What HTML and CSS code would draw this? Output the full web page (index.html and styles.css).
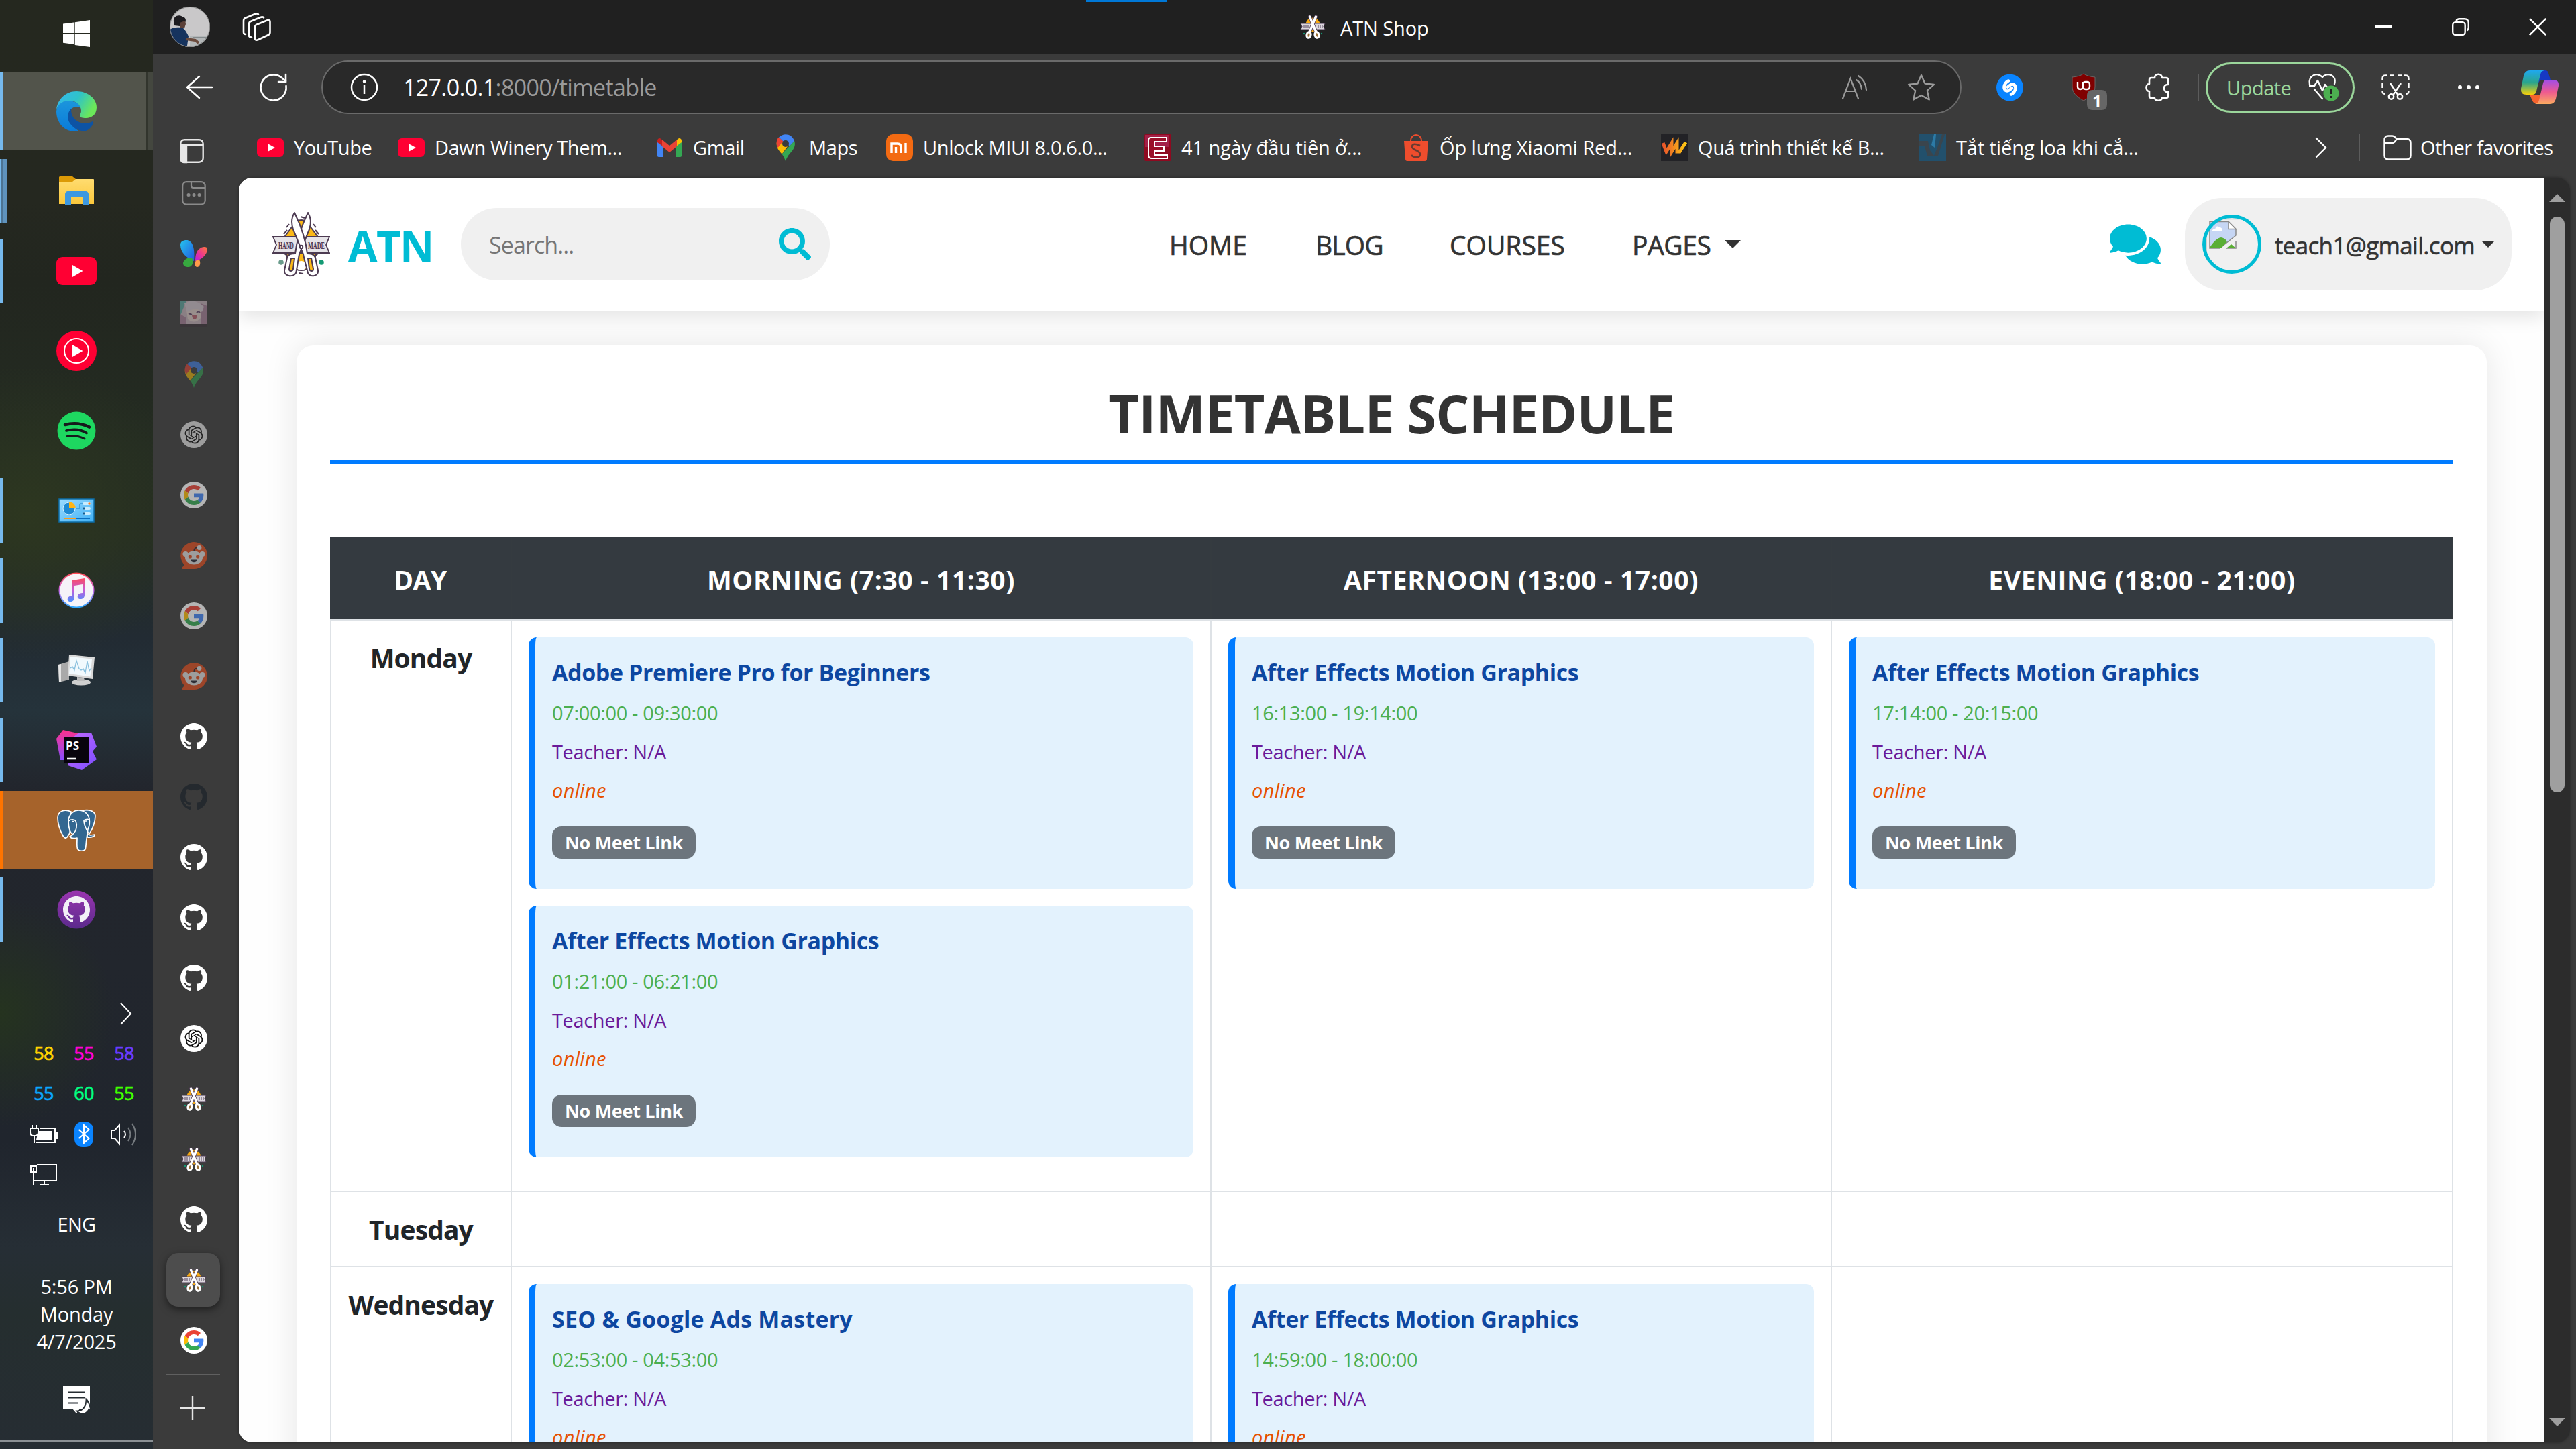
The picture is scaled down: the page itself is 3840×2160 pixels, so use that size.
FILE: index.html
```html
<!DOCTYPE html>
<html lang="en">
<head>
<meta charset="utf-8">
<title>ATN Shop</title>
<link rel="stylesheet" href="styles.css">
</head>
<body>
<svg class="defs" width="0" height="0">
  <defs>
    <linearGradient id="edgeTop" x1="0" y1="0" x2="1" y2="0.4"><stop offset="0" stop-color="#35b8f1"/><stop offset=".55" stop-color="#2fc3c8"/><stop offset="1" stop-color="#6be85a"/></linearGradient>
    <linearGradient id="edgeLeft" x1="0" y1="0" x2="0" y2="1"><stop offset="0" stop-color="#1c95dc"/><stop offset="1" stop-color="#0a7bd9"/></linearGradient>
    <linearGradient id="folder" x1="0" y1="0" x2="0" y2="1"><stop offset="0" stop-color="#ffdc70"/><stop offset="1" stop-color="#fbc83c"/></linearGradient>
    <linearGradient id="panel" x1="0" y1="0" x2="1" y2="1"><stop offset="0" stop-color="#9ddcff"/><stop offset="1" stop-color="#3fb0f5"/></linearGradient>
    <linearGradient id="note" x1="0" y1="0" x2="0" y2="1"><stop offset="0" stop-color="#fb4a63"/><stop offset=".5" stop-color="#c55bd8"/><stop offset="1" stop-color="#4a90ff"/></linearGradient>
    <linearGradient id="ring" x1="0" y1="0" x2="0" y2="1"><stop offset="0" stop-color="#ff4b57"/><stop offset=".5" stop-color="#c86be8"/><stop offset="1" stop-color="#2fa8ff"/></linearGradient>
    <linearGradient id="psA" x1="0" y1="0" x2="0" y2="1"><stop offset="0" stop-color="#ff318c"/><stop offset="1" stop-color="#8a4dff"/></linearGradient>
    <linearGradient id="psB" x1="0" y1="0" x2="1" y2="1"><stop offset="0" stop-color="#c76bff"/><stop offset="1" stop-color="#7a4dff"/></linearGradient>
    <linearGradient id="ghd" x1="0" y1="0" x2="0" y2="1"><stop offset="0" stop-color="#9a35b0"/><stop offset="1" stop-color="#5b2a8c"/></linearGradient>
    <linearGradient id="wingA" x1="0" y1="0" x2="1" y2="1"><stop offset="0" stop-color="#25c3ee"/><stop offset="1" stop-color="#2257e0"/></linearGradient>
    <linearGradient id="wingB" x1="1" y1="0" x2="0" y2="1"><stop offset="0" stop-color="#ff7a3a"/><stop offset=".5" stop-color="#ee3a8a"/><stop offset="1" stop-color="#b31ce8"/></linearGradient>
    <linearGradient id="copA" x1="0" y1="0" x2="0" y2="1"><stop offset="0" stop-color="#1fa8f0"/><stop offset=".5" stop-color="#2aa58c"/><stop offset="1" stop-color="#f7d10a"/></linearGradient>
    <linearGradient id="copB" x1="0" y1="0" x2="0" y2="1"><stop offset="0" stop-color="#a04de8"/><stop offset=".5" stop-color="#ee5a90"/><stop offset="1" stop-color="#fbab60"/></linearGradient>
    <linearGradient id="wg" x1="0" y1="0" x2="1" y2="0"><stop offset="0" stop-color="#e8542a"/><stop offset="1" stop-color="#ffc814"/></linearGradient>
    <clipPath id="round"><circle cx="30" cy="30" r="30"/></clipPath>
  </defs>

  <symbol id="github" viewBox="0 0 16 16"><path fill="currentColor" d="M8 0C3.58 0 0 3.58 0 8c0 3.54 2.29 6.53 5.47 7.59.4.07.55-.17.55-.38 0-.19-.01-.82-.01-1.49-2.01.37-2.53-.49-2.69-.94-.09-.23-.48-.94-.82-1.13-.28-.15-.68-.52-.01-.53.63-.01 1.08.58 1.23.82.72 1.21 1.87.87 2.33.66.07-.52.28-.87.51-1.07-1.78-.2-3.64-.89-3.64-3.95 0-.87.31-1.59.82-2.15-.08-.2-.36-1.02.08-2.12 0 0 .67-.21 2.2.82.64-.18 1.32-.27 2-.27.68 0 1.36.09 2 .27 1.53-1.04 2.2-.82 2.2-.82.44 1.1.16 1.92.08 2.12.51.56.82 1.27.82 2.15 0 3.07-1.87 3.75-3.65 3.95.29.25.54.73.54 1.48 0 1.07-.01 1.93-.01 2.2 0 .21.15.46.55.38A8.013 8.013 0 0016 8c0-4.42-3.58-8-8-8z"/></symbol>

  <symbol id="openai" viewBox="0 0 40 40"><circle cx="20" cy="20" r="20" fill="#fff"/><path transform="translate(6.5 6.5) scale(1.125)" fill="#111" d="M22.2819 9.8211a5.9847 5.9847 0 0 0-.5157-4.9108 6.0462 6.0462 0 0 0-6.5098-2.9A6.0651 6.0651 0 0 0 4.9807 4.1818a5.9847 5.9847 0 0 0-3.9977 2.9 6.0462 6.0462 0 0 0 .7427 7.0966 5.98 5.98 0 0 0 .511 4.9107 6.051 6.051 0 0 0 6.5146 2.9001A5.9847 5.9847 0 0 0 13.2599 24a6.0557 6.0557 0 0 0 5.7718-4.2058 5.9894 5.9894 0 0 0 3.9977-2.9001 6.0557 6.0557 0 0 0-.7475-7.0729zm-9.022 12.6081a4.4755 4.4755 0 0 1-2.8764-1.0408l.1419-.0804 4.7783-2.7582a.7948.7948 0 0 0 .3927-.6813v-6.7369l2.02 1.1686a.071.071 0 0 1 .038.052v5.5826a4.504 4.504 0 0 1-4.4945 4.4944zm-9.6607-4.1254a4.4708 4.4708 0 0 1-.5346-3.0137l.142.0852 4.783 2.7582a.7712.7712 0 0 0 .7806 0l5.8428-3.3685v2.3324a.0804.0804 0 0 1-.0332.0615L9.74 19.9502a4.4992 4.4992 0 0 1-6.1408-1.6464zM2.3408 7.8956a4.485 4.485 0 0 1 2.3655-1.9728V11.6a.7664.7664 0 0 0 .3879.6765l5.8144 3.3543-2.0201 1.1685a.0757.0757 0 0 1-.071 0l-4.8303-2.7865A4.504 4.504 0 0 1 2.3408 7.872zm16.5963 3.8558L13.1038 8.364 15.1192 7.2a.0757.0757 0 0 1 .071 0l4.8303 2.7913a4.4944 4.4944 0 0 1-.6765 8.1042v-5.6772a.79.79 0 0 0-.407-.667zm2.0107-3.0231l-.142-.0852-4.7735-2.7818a.7759.7759 0 0 0-.7854 0L9.409 9.2297V6.8974a.0662.0662 0 0 1 .0284-.0615l4.8303-2.7866a4.4992 4.4992 0 0 1 6.6802 4.66zM8.3065 12.863l-2.02-1.1638a.0804.0804 0 0 1-.038-.0567V6.0742a4.4992 4.4992 0 0 1 7.3757-3.4537l-.142.0805L8.704 5.459a.7948.7948 0 0 0-.3927.6813zm1.0976-2.3654l2.602-1.4998 2.6069 1.4998v2.9994l-2.5974 1.4997-2.6067-1.4997Z"/></symbol>

  <symbol id="google" viewBox="0 0 40 40"><circle cx="20" cy="20" r="20" fill="#fff"/><g transform="translate(5 5) scale(.625)"><path fill="#EA4335" d="M24 9.5c3.54 0 6.71 1.22 9.21 3.6l6.85-6.85C35.9 2.38 30.47 0 24 0 14.62 0 6.51 5.38 2.56 13.22l7.98 6.19C12.43 13.72 17.74 9.5 24 9.5z"/><path fill="#4285F4" d="M46.98 24.55c0-1.57-.15-3.09-.38-4.55H24v9.02h12.94c-.58 2.96-2.26 5.48-4.78 7.18l7.73 6c4.51-4.18 7.09-10.36 7.09-17.65z"/><path fill="#FBBC05" d="M10.53 28.59c-.48-1.45-.76-2.99-.76-4.59s.27-3.14.76-4.59l-7.98-6.19C.92 16.46 0 20.12 0 24c0 3.88.92 7.54 2.56 10.78l7.97-6.19z"/><path fill="#34A853" d="M24 48c6.48 0 11.93-2.13 15.89-5.81l-7.73-6c-2.15 1.45-4.92 2.3-8.16 2.3-6.26 0-11.57-4.22-13.47-9.91l-7.98 6.19C6.51 42.62 14.62 48 24 48z"/></g></symbol>

  <symbol id="reddit" viewBox="0 0 40 40"><path fill="#ff4f18" d="M20 0a20 20 0 1 1 0 40H3.5c-1.500 0-2-1.200-1-2.300L6 34A20 20 0 0 1 20 0z"/><circle cx="7.500" cy="18" r="4" fill="#fff"/><circle cx="32.500" cy="18" r="4" fill="#fff"/><ellipse cx="20" cy="23.500" rx="13" ry="10" fill="#fff"/><path d="M20 14c0-4 2-6 6-5.500" fill="none" stroke="#223" stroke-width="1.500"/><circle cx="28" cy="8.500" r="3.400" fill="#fff"/><circle cx="14.300" cy="22" r="2.600" fill="#ff4f18"/><circle cx="25.700" cy="22" r="2.600" fill="#ff4f18"/><path d="M15 26.500h10c-.5 5-9.500 5-10 0z" fill="#223"/></symbol>

  <symbol id="maps" viewBox="0 0 28 40"><path fill="#34A853" d="M27.200 10c2.500 8-2 13.500-6.500 18.500C17.500 32 16 35 14 40c-2-5-3-7-5.500-10.500z"/><path fill="#FBBC04" d="M.8 12.500 7.200 9l9.600 9.500L8.500 29.500C4.500 25 0 20 .8 12.500z"/><path fill="#EA4335" d="M.6 14C.4 10 2 6 4 4.500l6.500 5.500L2.500 20C1.500 18 .8 16 .6 14z"/><path fill="#4285F4" d="M4 4.500C10-2 23-2 27.200 10L20 17.500 10 10z"/><circle cx="14" cy="14" r="5" fill="#3b3b3b"/></symbol>

  <symbol id="youtube" viewBox="0 0 60 42"><rect width="60" height="42" rx="9" fill="#ff0033"/><path d="M24 12v18l15.500-9z" fill="#fff"/></symbol>

  <symbol id="atn" viewBox="0 0 86 98">
    <path d="M43 13c6 0 9 3 12 8l15 20H16l15-20c3-5 6-8 12-8z" fill="#fbb917" stroke="#4d3b52" stroke-width="2"/>
    <path d="M21 62h44c-2 16-11 26-22 26S23 78 21 62z" fill="#fbb917" stroke="#4d3b52" stroke-width="2"/>
    <ellipse cx="43" cy="81" rx="8" ry="7" fill="#fff"/>
    <path d="M1 38h84l-5 12 5 12H1l5-12z" fill="#e6e4e8" stroke="#4d3b52" stroke-width="1.800"/>
    <path d="M17 34l5-6M21 24l4-5M69 34l-5-6M65 24l-4-5M42 8l6 2M40 92l6 1M22 66l-4-3M64 66l4-3" stroke="#4d3b52" stroke-width="2"/>
    <g fill="#fff" stroke="#4d3b52" stroke-width="2" stroke-linejoin="round">
      <path d="M53 2c5 8 5 16 2 25L40 64c-2 10-3 20-5 28-4 7-18 5-17-4l4-19c2-6 8-6 12-6 2-18 8-38 19-61z"/>
      <path d="M33 2c-5 8-5 16-2 25l15 37c2 10 5 20 7 28 4 7 16 5 15-4l-4-19c-2-6-8-6-12-6-2-18-8-38-19-61z"/>
      <path d="M28 70h5l-2 16c-1 4-6 4-6 0z" fill="#fbb917"/><path d="M58 70h-5l2 16c1 4 6 4 6 0z" fill="#fbb917"/>
      <circle cx="43" cy="53" r="2.200"/>
    </g>
    <circle cx="13" cy="76" r="3.800" fill="#6a9c8c"/><circle cx="73" cy="76" r="3.800" fill="#149a74"/>
    <text x="9" y="56" class="logo-word" textLength="23" lengthAdjust="spacingAndGlyphs">HAND</text>
    <text x="53" y="56" class="logo-word" textLength="25" lengthAdjust="spacingAndGlyphs">MADE</text>
  </symbol>

  <symbol id="atn-small" viewBox="0 0 40 40">
    <circle cx="20" cy="17" r="10.500" fill="#f6a913"/>
    <path d="M2 15h36l-2 4.500 2 4.500H2l2-4.500z" fill="#dcd8de" stroke="#4d3b52" stroke-width="1"/>
    <path d="M7 17v5M10 17v5M13 17v5M28 17v5M31 17v5M34 17v5" stroke="#6a5a70" stroke-width="1.200"/>
    <g fill="none" stroke="#4d3b52" stroke-width="5" stroke-linecap="round"><path d="M15.500 5 25 28M24.500 5 15 28"/></g>
    <g fill="none" stroke="#fff" stroke-width="3.400" stroke-linecap="round"><path d="M15.500 5 25 28M24.500 5 15 28"/></g>
    <g fill="#9a7038" stroke="#fff" stroke-width="3"><ellipse cx="14" cy="32" rx="3" ry="4.400" transform="rotate(14 14 32)"/><ellipse cx="26" cy="32" rx="3" ry="4.400" transform="rotate(-14 26 32)"/></g>
    <circle cx="33" cy="30" r="1.200" fill="#149a74"/><circle cx="7" cy="30" r="1.200" fill="#149a74"/>
  </symbol>
</svg>

<div class="desktop">
  <aside class="taskbar">
    <div class="task start"><svg width="40" height="40" viewBox="0 0 40 40"><path fill="#fff" d="M0 5.600 16.300 3.400V19H0zM17.700 3.200 40 0v19H17.700zM0 20.400h16.300V36L0 33.800zM17.700 20.400H40V40l-22.300-3z"/></svg></div>
    <div class="task active"><svg width="60" height="60" viewBox="0 0 60 60"><path fill="url(#edgeLeft)" d="M0 30C1 17 12 13 21 14.500c9 1 15 5 16 11-4-4-14-3-17 4-3 9 2 22 13 29.500C15 63 0 49 0 30z"/><path fill="#0d53a4" d="M22.500 25.500C15 33 15 44 24 52c6 6 14 8 20 7 5-2 9-6 11-12 .5-2-.5-2.500-2-1.600-6 3-14 3.300-20 .1-8-4-12-12-10.500-20z"/><path fill="url(#edgeTop)" d="M0 27C2 11 15 0 30 0c17 0 30 11 30 24 0 11-8 16-16 16-5 0-9-1-9-3.500 0-2 2-3 2-7.500C37 20 29 14 19 14 10 14 3 19 0 27z"/></svg></div>
    <div class="task open multi"><svg width="54" height="44" viewBox="0 0 54 44"><path fill="#dc9a06" d="M2 0h19l5 4v5H1V1z"/><path fill="url(#folder)" d="M1 8h20l5-4h26c1 0 1 1 1 1v36H1z"/><path fill="#3d98e0" d="M10 43V26c0-2 2-4 4-4h27c2 0 4 2 4 4v17h-9V30H19v13z"/></svg></div>
    <div class="task open"><svg width="60" height="42"><use href="#youtube"/></svg></div>
    <div class="task"><svg width="60" height="60" viewBox="0 0 60 60"><circle cx="30" cy="30" r="30" fill="#ff0033"/><circle cx="30" cy="30" r="18" fill="none" stroke="#fff" stroke-width="2"/><path d="M24 21v18l15.500-9z" fill="#fff"/></svg></div>
    <div class="task"><svg width="58" height="58" viewBox="0 0 58 58"><circle cx="29" cy="29" r="28.500" fill="#1ed760"/><g fill="none" stroke="#16191b" stroke-linecap="round"><path d="M12 20c12-3 25-2 36 3.500" stroke-width="4.600"/><path d="M14 29c10-2.500 21-2 30 3.500" stroke-width="3.800"/><path d="M15 37.500c8-1.500 17-1 26 3.500" stroke-width="3"/></g></svg></div>
    <div class="task open"><svg width="54" height="36" viewBox="0 0 54 36"><rect x="1" y="1" width="52" height="34" fill="url(#panel)" stroke="#0d6ea8" stroke-width="1.500"/><circle cx="16" cy="15" r="9" fill="#1f8bd4" stroke="#d5f0ff"/><path d="M16 15V5a10 10 0 0 1 10 10z" fill="#ffb515"/><path d="M27 15h5V8h4" fill="none" stroke="#1b80c0"/><path d="M38 8h8M38 15h8M38 22h8" stroke="#c8ecff" stroke-width="4" stroke-linecap="round"/><circle cx="46" cy="8" r="1.700" fill="#ff7a1a"/><circle cx="38" cy="15" r="1.700" fill="#0d5c94"/><circle cx="38" cy="22" r="1.700" fill="#0d5c94"/><path d="M8 30h19" stroke="#ff9a15" stroke-width="2"/><path d="M27 30h20" stroke="#0c6fc0" stroke-width="2"/></svg></div>
    <div class="task open"><svg width="54" height="54" viewBox="0 0 54 54"><circle cx="27" cy="27" r="25.500" fill="#f5f3f8" stroke="url(#ring)" stroke-width="2"/><path fill="url(#note)" d="M21 12l18-3v25c0 4-3 6-6 6s-5-2-4-5c1-3 4-4 7-4V18l-12 2v18c0 4-3 6-6 6s-5-2-4-5c1-3 4-4 7-4z"/></svg></div>
    <div class="task open"><svg width="56" height="48" viewBox="0 0 56 48"><path fill="#a9a9a9" d="M1 16 17 11v27L2 42z"/><path fill="#e4e4e4" d="M1 16l4-1v26l-3 1z"/><path fill="#d9d9d9" d="M17 1l38 4-3 32-37-5z"/><path fill="#f1f9fd" d="M19 4l32 3.500-2.500 26L17 29z"/><path d="M19 21l3-2 3 5 3-14 4 12 3 2 3-2 3 6 3-17 3 14 3-4" fill="none" stroke="#8ac0de" stroke-width="1.300"/><ellipse cx="35" cy="42" rx="14" ry="4.500" fill="#cfcfcf"/><path fill="#bbb" d="M29 34l10 1 1 5H29z"/></svg></div>
    <div class="task open"><svg width="60" height="60" viewBox="0 0 60 60"><path fill="url(#psA)" d="M10 0l22 5v40H6L0 13z"/><path fill="url(#psB)" d="M34 4h18l8 21-6 7 6 12-22 16-21-7V17z"/><rect x="11" y="11" width="38" height="38" fill="#08040c"/><text x="14" y="30" class="ps-word">PS</text><path d="M16 43h14" stroke="#fff" stroke-width="2.600"/></svg></div>
    <div class="task alert"><svg width="60" height="62" viewBox="0 0 60 62"><g fill="#336791" stroke="#fff" stroke-width="1.700" stroke-linejoin="round"><path d="M38 3c8-3 19-1 20 7 0 9-4 20-9 27l-9-9z"/><path d="M22 4C12 0 2 3 2 13c0 9 4 20 8 27 2 3 4 4 6 2l4-6z"/><path d="M46 37c3 3 6 2 11 1 1 2-4 5-11 4z"/><path d="M18 16C20 6 27 2 33 2c9 0 15 6 16 13 1 6 0 11-2 15l-2 14c-1 8-1 14-2 16-2 3-9 3-11 0-2-3-1-11-1-17-4 1-9 1-11-2 2-1 4-2 5-3-6-3-7-12-7-22z"/><path d="M18 18c4-3 9-3 11 0 2 5 2 14-4 19M41 17c3-2 6-2 8-1M41 17c0 8 4 13 6 18" fill="none"/></g><path d="M23 18.500h4M42 18h3" stroke="#fff" stroke-width="1.600"/></svg></div>
    <div class="task open"><svg width="58" height="58" viewBox="0 0 58 58"><circle cx="29" cy="29" r="28.500" fill="url(#ghd)"/><use href="#github" x="9" y="9" width="40" height="40" color="#f3f0f7"/></svg></div>

    <div class="tray">
      <i></i><i></i><svg class="chevron" width="18" height="34" viewBox="0 0 18 34" fill="none" stroke="#fff" stroke-width="2"><path d="M1 1l15 16L1 33"/></svg>
      <span class="temp t1">58</span><span class="temp t2">55</span><span class="temp t3">58</span>
      <span class="temp t4">55</span><span class="temp t5">60</span><span class="temp t6">55</span>
      <svg width="42" height="30" viewBox="0 0 42 30" fill="none" stroke="#fff" stroke-width="2"><path d="M15 6h23v21H10M39 12h2v9h-2"/><path d="M13 10h20v13H10z" fill="#fff" stroke="none"/><path d="M1 6h12v6c0 4-2 5-5 5H6c-3 0-5-2-5-5zM4 6V1M10 6V1M7 17v11" fill="#22282d"/></svg>
      <svg width="28" height="40" viewBox="0 0 28 40"><rect width="28" height="38" y="1" rx="12" fill="#0a84ff"/><path d="M6.500 13l15 13L14 33V6l7.500 7-15 13" fill="none" stroke="#fff" stroke-width="2"/></svg>
      <svg width="42" height="38" viewBox="0 0 42 38" fill="none" stroke="#fff" stroke-width="2"><path d="M2 13h5l7-8v28l-7-8H2z"/><path d="M21 14q4 5 0 10"/><path d="M27 9q7 10 0 20M33 3q10 16 0 32" stroke="#777c80"/></svg>
      <svg width="42" height="34" viewBox="0 0 42 34" fill="none" stroke="#fff" stroke-width="2"><path d="M11 2h29v24H6M15 32h14M22 26v6"/><path d="M2 4h8v9H2zM6 7v25"/></svg><i></i><i></i>
    </div>
    <div class="lang">ENG</div>
    <div class="clock"><span>5:56 PM</span><span>Monday</span><span>4/7/2025</span></div>
    <div class="notify"><svg width="42" height="42" viewBox="0 0 42 42"><path fill="#fff" d="M1 0h40v34H26l-5 7-6-7H1z"/><path d="M9 9.500h24M9 17.500h24M9 25.500h14" stroke="#262d32" stroke-width="2"/><path d="M36 21c4 4 5 10 1 15s-11 5-14 2c6 0 13-6 13-17z" fill="#fff" stroke="#262d32" stroke-width="3"/><path d="M36 23c4 4 5 9 1 14s-10 4-13 1c6 0 12-6 12-15z" fill="#fff"/></svg></div>
    <div class="peek"></div>
  </aside>

  <div class="browser">
    <header class="titlebar">
      <svg class="avatar" width="60" height="60" viewBox="0 0 60 60"><g clip-path="url(#round)"><path fill="#c9c8c9" d="M0 0h60v60H0z"/><path fill="#b3b7b8" d="M30 44h30v16H30z"/><path d="M34 46h26" stroke="#555d60"/><path fill="#1c1b1f" d="M6 22c-1-8 8-11 13-7 5 1 6 5 4 9l-8 5-8-1z"/><path fill="#5b4038" d="M15 24l8-3 1 5-2 6-7 1z"/><path fill="#16335e" d="M0 34c6-4 14-4 20-2 4 3 6 8 8 12l-2 14L0 60z"/><path d="M24 48l14 2 5 4" fill="none" stroke="#6a4a3c" stroke-width="4"/></g><circle cx="30" cy="30" r="29.500" fill="none" stroke="#8a8a8a"/></svg>
      <svg class="workspaces" width="42" height="42" viewBox="0 0 42 42" fill="none" stroke="#fff" stroke-width="2.600" stroke-linejoin="round" stroke-linecap="round"><path d="M18 21.500q0-2.500 2.500-3.800l16-6.500q4-1 4 2.500v15.500q0 2.500-2.500 3.800l-15 7q-5 2-5-2z"/><path d="M13 36.500c-3 0-4-1-4-3V17q0-3 2.500-4L26 7q4-1.500 5 .5M4 32c-2 0-3-1-3-3V12q0-3 2.500-4L18 2q4-1.500 5 .5"/></svg>
      <div class="tab-title"><svg width="40" height="40"><use href="#atn-small"/></svg><span>ATN Shop</span></div>
      <div class="loading"></div>
      <div class="window-buttons">
        <svg width="26" height="26" viewBox="0 0 26 26"><path d="M0 12.500h26" stroke="#fff" stroke-width="3"/></svg>
        <svg width="26" height="26" viewBox="0 0 26 26" fill="none" stroke="#fff" stroke-width="2.400"><rect x="1.200" y="6.200" width="18.500" height="18.500" rx="4"/><path d="M6.500 4q1-2.800 5-2.800h7q6.300 0 6.300 6.300v6q0 4-2.800 5"/></svg>
        <svg width="26" height="26" viewBox="0 0 26 26" stroke="#fff" stroke-width="2.600"><path d="M.8.800l24.400 24.400M25.200.8L.8 25.200"/></svg>
      </div>
    </header>

    <div class="toolbar">
      <svg class="back" width="40" height="36" viewBox="0 0 40 36" fill="none" stroke="#fff" stroke-width="2.400" stroke-linecap="round" stroke-linejoin="round"><path d="M20 2 2 18l18 16M2 18h37"/></svg>
      <svg class="reload" width="42" height="42" viewBox="0 0 42 42" fill="none" stroke="#fff" stroke-width="2.600" stroke-linecap="round"><path d="M39.500 19A19 19 0 1 1 33 7l6 5"/><path d="M39 2v11H28"/></svg>
      <div class="address">
        <svg class="info" width="42" height="42" viewBox="0 0 42 42" fill="none" stroke="#fff" stroke-width="2.500"><circle cx="21" cy="21" r="19"/><path d="M21 18v13"/><circle cx="21" cy="12.500" r="1" fill="#fff"/></svg>
        <span class="url"><b>127.0.0.1</b>:8000/timetable</span>
        <svg class="read" width="40" height="38" viewBox="0 0 40 38" fill="none" stroke="#9a9a9a" stroke-width="2.200" stroke-linecap="round"><path d="M2 36 13.500 6 25 36M6 25h15M22 8q7 4 8 14M25 2q11 7 12 21"/></svg>
        <svg class="star" width="42" height="40" viewBox="0 0 42 40" fill="none" stroke="#9a9a9a" stroke-width="2.300" stroke-linejoin="round"><path d="M21 2l5.500 12.500L40 16 29.800 25l3 13.500L21 32 9.200 38.500l3-13.500L2 16l13.500-1.500z"/></svg>
      </div>
      <svg class="shazam" width="40" height="41" viewBox="0 0 40 41"><circle cx="20" cy="20.500" r="20" fill="#0a84ff"/><g fill="none" stroke="#fff" stroke-width="4.600" stroke-linecap="round" stroke-linejoin="round"><path d="M18 10.500c-3 1-6 5-6.500 9 0 5 4 7.500 7.500 5l4-3"/><path d="M22 30.500c3-1 6-5 6.500-9 0-5-4-7.500-7.500-5l-4 3"/></g></svg>
      <div class="ublock"><svg width="38" height="42" viewBox="0 0 38 42"><path d="M19 1c5 3 10 4.500 17 5v14c0 9-6 15-17 21C8 35 2 29 2 20V6C9 5.500 14 4 19 1z" fill="#800000" stroke="#666"/><path d="M10 13v7q0 4 4 4t4-4v-7M18 20q0 4 4 4h2q4 0 4-4v-3q0-4-4-4h-2q-4 0-4 4" fill="none" stroke="#fff" stroke-width="2.400"/></svg><span class="count">1</span></div>
      <svg class="puzzle" width="36" height="42" viewBox="0 0 36 42" fill="none" stroke="#fff" stroke-width="2.600" stroke-linejoin="round"><path d="M14 7c0-7 11-7 11 0h6q3 0 3 3v7c-8-1-8 12 0 11v6q0 3-3 3h-6c0 5-11 5-11 0H9q-3 0-3-3v-7C0 27 0 16 6 16v-6q0-3 3-3z"/></svg>
      <div class="rule"></div>
      <div class="update"><span>Update</span>
        <svg width="46" height="42" viewBox="0 0 46 42" fill="none"><path d="M2 17C-1 3 14-2 21 6c7-8 22-3 18 10M9 24l12 14" stroke="#fff" stroke-width="2.400" stroke-linecap="round"/><path d="M1 19h8l5-8 7 15 4-9 3 4h5" stroke="#fff" stroke-width="2.400" stroke-linejoin="round"/><circle cx="34" cy="30" r="11.500" fill="#4caf50"/><path d="M34 23v8M34 34v3" stroke="#222" stroke-width="2.600"/></svg></div>
      <svg class="snip" width="42" height="38" viewBox="0 0 42 38" fill="none" stroke="#fff" stroke-width="2.400"><path d="M1.500 8V6q0-4.500 4.500-4.500h2M13 1.500h6M24 1.500h6M34 1.500h2q4.500 0 4.500 4.500v2M1.500 13v7M40.500 13v7M1.500 25q0 4 4.500 4M40.500 25q0 4-4.500 4M13 13l12 18M29 13 17 31"/><circle cx="14.500" cy="33" r="3.700"/><circle cx="27.500" cy="33" r="3.700"/></svg>
      <svg class="dots" width="34" height="8" viewBox="0 0 34 8" fill="#fff"><circle cx="4" cy="4" r="3"/><circle cx="17" cy="4" r="3"/><circle cx="30" cy="4" r="3"/></svg>
      <svg class="copilot" width="56" height="52" viewBox="0 0 56 52"><path fill="#1638c4" d="M22 1h14q4 0 5 4l3 10H33q-6 0-8 7z"/><path fill="#f4632e" d="M13 37h16l6-8-2 15q-1 7-8 7-6 0-8-5z"/><path fill="url(#copA)" d="M13 1h22q-5 1-6 6l-6 25q-1 5-6 5H8q-9 0-8-9L4 9q2-8 9-8z"/><path fill="url(#copB)" d="M43 51H21q5-1 6-6l6-25q1-5 6-5h9q9 0 8 9l-4 19q-2 8-9 8z"/></svg>
    </div>

    <div class="workarea">
      <nav class="vtabs">
        <svg class="collapse" width="36" height="36" viewBox="0 0 36 36" fill="none" stroke="#e6e6e6" stroke-width="2.400"><rect x="1.200" y="1.200" width="33.500" height="33.500" rx="6"/><path d="M1 9h34"/><path d="M2 9h8v26H6q-4 0-4-4z" fill="#e6e6e6"/></svg>
        <svg class="group" width="36" height="36" viewBox="0 0 36 36" fill="none" stroke="#8a8a8a" stroke-width="2.200"><rect x="1.200" y="1.200" width="33.500" height="33.500" rx="6"/><path d="M14 1v6q0 3 3 3h18"/><path d="M10 20.500h.1M18 20.500h.1M26 20.500h.1" stroke-width="5" stroke-linecap="round"/></svg>
        <div class="vtab"><svg width="40" height="40" viewBox="0 0 40 40"><path fill="url(#wingA)" d="M0 7C0 2 4 0 9 0c8 0 13 10 11 31C10 27 0 19 0 7z"/><path fill="url(#wingB)" d="M40 13c0-4-8-4-12 0-4 3-6 9-6 18 8-1 18-9 18-18z"/><path fill="#37a83f" d="M19 28c-6-4-14 0-15 6 0 4 3 6 8 6 4 0 7-4 7-12z"/><path fill="#ff9a4a" d="M22 32c2-4 7-4 7 0 1 4-1 8-4 8s-4-3-3-8z"/></svg></div>
        <div class="vtab asleep"><svg width="40" height="40" viewBox="0 0 40 40"><path fill="#d9c2cc" d="M0 0h40v40H0z"/><path fill="#5fb5ad" d="M0 0h9L0 22z"/><path fill="#b58aa6" d="M30 4l10 4v28H30zM0 20l9 6v10H0z"/><path fill="#f7e1dc" d="M9 14q11-8 21 0v12q-9 10-19 2z"/><path fill="#e9dbe4" d="M6 4q14-9 29 5l-3 8q-8-9-22 0z"/><path d="M12 19l5 2M24 18q3-3 5 0" stroke="#6b4a74" stroke-width="2" fill="none"/><path fill="#c96274" d="M17 22h8q-1 6-4 6t-4-6z"/><path fill="#3a3038" d="M0 35h40v5H0z"/></svg></div>
        <div class="vtab asleep"><svg width="28" height="40"><use href="#maps"/></svg></div>
        <div class="vtab asleep"><svg width="40" height="40"><use href="#openai"/></svg></div>
        <div class="vtab asleep light"><svg width="40" height="40"><use href="#google"/></svg></div>
        <div class="vtab asleep"><svg width="40" height="40"><use href="#reddit"/></svg></div>
        <div class="vtab asleep light"><svg width="40" height="40"><use href="#google"/></svg></div>
        <div class="vtab asleep"><svg width="40" height="40"><use href="#reddit"/></svg></div>
        <div class="vtab"><svg width="40" height="40"><use href="#github"/></svg></div>
        <div class="vtab dark"><svg width="40" height="40"><use href="#github"/></svg></div>
        <div class="vtab"><svg width="40" height="40"><use href="#github"/></svg></div>
        <div class="vtab"><svg width="40" height="40"><use href="#github"/></svg></div>
        <div class="vtab"><svg width="40" height="40"><use href="#github"/></svg></div>
        <div class="vtab"><svg width="40" height="40"><use href="#openai"/></svg></div>
        <div class="vtab"><svg width="40" height="40"><use href="#atn-small"/></svg></div>
        <div class="vtab"><svg width="40" height="40"><use href="#atn-small"/></svg></div>
        <div class="vtab"><svg width="40" height="40"><use href="#github"/></svg></div>
        <div class="vtab current"><svg width="40" height="40"><use href="#atn-small"/></svg></div>
        <div class="vtab"><svg width="40" height="40"><use href="#google"/></svg></div>
        <div class="vtab-rule"></div>
        <svg class="new-tab" width="36" height="36" viewBox="0 0 36 36" stroke="#e6e6e6" stroke-width="2.400"><path d="M18 0v36M0 18h36"/></svg>
      </nav>

      <div class="column">
        <div class="bookmarks">
          <div class="bm w210"><svg width="40" height="28" viewBox="0 0 40 28"><rect width="40" height="28" rx="6" fill="#ff0033"/><path d="M16 8v12l11-6z" fill="#fff"/></svg><span>YouTube</span></div>
          <div class="bm w385"><svg width="40" height="28" viewBox="0 0 40 28"><rect width="40" height="28" rx="6" fill="#ff0033"/><path d="M16 8v12l11-6z" fill="#fff"/></svg><span>Dawn Winery Them...</span></div>
          <div class="bm w173"><svg width="40" height="28" viewBox="0 0 40 28"><path fill="#4285f4" d="M2 4l8 6v18H4q-2 0-2-2z"/><path fill="#34a853" d="M30 10l8-6v22q0 2-2 2h-6z"/><path fill="#c5221f" d="M2 4q0-4 4-4l4 3v9L2 6z"/><path fill="#fbbc04" d="M38 4q0-4-4-4l-4 3v9l8-6z"/><path fill="#ea4335" d="M9 2l11 9 11-9v10L20 21 9 12z"/></svg><span>Gmail</span></div>
          <div class="bm w170"><svg width="40" height="40"><use href="#maps"/></svg><span>Maps</span></div>
          <div class="bm w385"><svg width="40" height="40" viewBox="0 0 40 40"><rect width="40" height="40" rx="10" fill="#f36a12"/><path d="M8 28V14h9q5 0 5 5v9M14.500 19v9M29 13v15" fill="none" stroke="#fff" stroke-width="3.400"/></svg><span>Unlock MIUI 8.0.6.0...</span></div>
          <div class="bm w385 vi"><svg width="40" height="40" viewBox="0 0 40 40"><rect width="40" height="40" rx="2" fill="#8f0a20"/><path d="M1 1h36v18H1z" fill="#a32048"/><path d="M33 5H10q-4 0-4 4v22q0 5 5 5h23v-5H15v-6h14v-7H15v-7h18z" fill="#9a1028" stroke="#fff" stroke-width="2"/></svg><span>41 ngày đầu tiên ở...</span></div>
          <div class="bm w385 vi"><svg width="40" height="40" viewBox="0 0 40 40"><path fill="#ee4d2d" d="M2 10h36l-2 27q0 3-3 3H7q-3 0-3-3z"/><path d="M12 10c0-12 16-12 16 0" fill="none" stroke="#ee4d2d" stroke-width="2"/><path d="M26 17q-11-5-12 1c0 7 12 5 12 12-1 7-11 4-13 1" fill="none" stroke="#6a3a30" stroke-width="2.600"/></svg><span>Ốp lưng Xiaomi Red...</span></div>
          <div class="bm w385"><svg width="40" height="40" viewBox="0 0 40 40"><path fill="#222226" d="M0 0h40v40H0z"/><path d="M3 13l5 13 8-13v13l8-13v13l4 0 9-14" fill="none" stroke="url(#wg)" stroke-width="5"/></svg><span>Quá trình thiết kế B...</span></div>
          <div class="bm w385 vi"><svg width="40" height="40" viewBox="0 0 40 40"><path fill="#22506c" d="M0 0h40v40H0z"/><path fill="#3a454d" d="M0 10h13l3 14 6 8 5-12 7-20 4 0-10 32H12L8 18H0z"/><path fill="#2c7aa6" d="M18 16l4-16h3l-2 20z"/></svg><span>Tắt tiếng loa khi cắ...</span></div>
          <svg class="more" width="18" height="32" viewBox="0 0 18 32" fill="none" stroke="#fff" stroke-width="2.400"><path d="M1.500 1.500 16 16 1.500 30.500"/></svg>
          <div class="rule"></div>
          <svg class="folder" width="42" height="38" viewBox="0 0 42 38" fill="none" stroke="#fff" stroke-width="2.400" stroke-linejoin="round"><path d="M1.500 7.500q0-6 6-6H13q2 0 3.500 1.500L20 6h14.500q6 0 6 6v18.500q0 6-6 6h-27q-6 0-6-6zM2 12h11q2 0 3.500-1.500L20 6"/></svg>
          <span class="other">Other favorites</span>
        </div>

        <div class="viewport">
          <div class="page">
            <header class="site-header">
              <svg class="logo" width="86" height="98"><use href="#atn"/></svg>
              <span class="brand">ATN</span>
              <div class="search"><span>Search...</span><svg width="48" height="48" viewBox="0 0 512 512"><path fill="#00bcd4" d="M505 442.700L405.300 343c-4.500-4.500-10.600-7-17-7H372c27.600-35.300 44-79.700 44-128C416 93.100 322.900 0 208 0S0 93.100 0 208s93.100 208 208 208c48.300 0 92.700-16.400 128-44v16.300c0 6.400 2.500 12.500 7 17l99.700 99.700c9.400 9.400 24.600 9.400 33.900 0l28.300-28.300c9.400-9.400 9.400-24.600.1-34zM208 336c-70.700 0-128-57.200-128-128 0-70.700 57.200-128 128-128 70.700 0 128 57.200 128 128 0 70.700-57.200 128-128 128z"/></svg></div>
              <nav class="menu"><span class="m1">HOME</span><span class="m2">BLOG</span><span class="m3">COURSES</span><span class="m4">PAGES</span><i class="caret"></i></nav>
              <svg class="chat" width="76" height="68" viewBox="0 0 576 512"><path fill="#00bcd4" d="M416 192c0-88.400-93.100-160-208-160S0 103.600 0 192c0 34.300 14.100 65.900 38 92-13.400 30.200-35.500 54.200-35.800 54.500-2.200 2.300-2.800 5.700-1.500 8.700S4.800 352 8 352c36.600 0 66.900-12.300 88.700-25 32.200 15.700 70.300 25 111.300 25 114.900 0 208-71.600 208-160zm122 220c23.900-26 38-57.700 38-92 0-66.900-53.500-124.200-129.300-148.100.9 6.600 1.300 13.300 1.300 20.100 0 105.900-107.700 192-240 192-10.800 0-21.300-.8-31.700-1.900C207.800 439.600 281.800 480 368 480c41 0 79.100-9.200 111.300-25 21.800 12.700 52.100 25 88.700 25 3.200 0 6.100-1.900 7.300-4.800 1.300-2.900.7-6.300-1.500-8.700-.3-.3-22.400-24.200-35.800-54.500z"/></svg>
              <div class="account">
                <svg width="88" height="88" viewBox="0 0 88 88"><path d="M22 6.500h38M6 24v38" stroke="#c8c8c8" stroke-width="1.500"/><path fill="#c6d6f4" stroke="#8a8a8a" stroke-width="1.500" d="M11 10.500h28l11 11V31L26 50H11z"/><path fill="#fff" d="M14 25q2-5 5-3 2-7 6-3 5-1 5 6z"/><path fill="#5aae34" d="M11 49q9-14 17-15 6 1 9 6l-9 10H11zM37 49l6-5 6 5z"/><path d="M50 39v11H36" fill="none" stroke="#8a8a8a" stroke-width="1.500"/><path fill="#fff" stroke="#8a8a8a" stroke-width="1.500" d="M39 10.500l11 11H39z"/><circle cx="44" cy="44" r="41.500" fill="none" stroke="#00bcd4" stroke-width="5"/></svg>
                <span>teach1@gmail.com</span><i class="caret small"></i>
              </div>
            </header>

            <main class="card">
              <h1>TIMETABLE SCHEDULE</h1>
              <div class="timetable">
                <div class="row head"><div>DAY</div><div>MORNING (7:30 - 11:30)</div><div>AFTERNOON (13:00 - 17:00)</div><div>EVENING (18:00 - 21:00)</div></div>
                <div class="row">
                  <div class="day">Monday</div>
                  <div class="slot">
                    <article class="event"><h2>Adobe Premiere Pro for Beginners</h2><p class="time">07:00:00 - 09:30:00</p><p class="teacher">Teacher: N/A</p><p class="mode">online</p><span class="badge">No Meet Link</span></article>
                    <article class="event"><h2>After Effects Motion Graphics</h2><p class="time">01:21:00 - 06:21:00</p><p class="teacher">Teacher: N/A</p><p class="mode">online</p><span class="badge">No Meet Link</span></article>
                  </div>
                  <div class="slot"><article class="event"><h2>After Effects Motion Graphics</h2><p class="time">16:13:00 - 19:14:00</p><p class="teacher">Teacher: N/A</p><p class="mode">online</p><span class="badge">No Meet Link</span></article></div>
                  <div class="slot"><article class="event"><h2>After Effects Motion Graphics</h2><p class="time">17:14:00 - 20:15:00</p><p class="teacher">Teacher: N/A</p><p class="mode">online</p><span class="badge">No Meet Link</span></article></div>
                </div>
                <div class="row"><div class="day">Tuesday</div><div class="slot"></div><div class="slot"></div><div class="slot"></div></div>
                <div class="row">
                  <div class="day">Wednesday</div>
                  <div class="slot"><article class="event"><h2 class="loose">SEO &amp; Google Ads Mastery</h2><p class="time">02:53:00 - 04:53:00</p><p class="teacher">Teacher: N/A</p><p class="mode">online</p><span class="badge">No Meet Link</span></article></div>
                  <div class="slot"><article class="event"><h2>After Effects Motion Graphics</h2><p class="time">14:59:00 - 18:00:00</p><p class="teacher">Teacher: N/A</p><p class="mode">online</p><span class="badge">No Meet Link</span></article></div>
                  <div class="slot"></div>
                </div>
              </div>
            </main>
          </div>
          <div class="scrollbar"><i class="up"></i><div class="thumb"></div><i class="down"></i></div>
        </div>
      </div>
    </div>
  </div>
</div>
</body>
</html>
```

FILE: styles.css
```css
* { box-sizing: border-box; }
body { margin: 0; font-family: "Open Sans", "Noto Sans", sans-serif; background: #3b3b3b; overflow: hidden; }
svg { display: block; flex: none; overflow: visible; }
.defs { position: absolute; }
h1, h2, p { margin: 0; }
.logo-word { font: 700 15px "Liberation Serif", serif; fill: #4d3b52; }
.ps-word { font: 700 17px "Open Sans", sans-serif; fill: #fff; }

.desktop { display: flex; width: 3840px; height: 2160px; overflow: hidden; }

/* Windows taskbar */
.taskbar {
  width: 228px; flex: none; display: flex; flex-direction: column;
  color: #fff; font-size: 29px;
  background:
    radial-gradient(ellipse 170px 170px at 0 1510px, #25331f, transparent),
    radial-gradient(ellipse 260px 220px at 40px 765px, #2d3720, transparent),
    linear-gradient(#25281f 0, #252820 300px, #22261f 420px, #242c22 660px, #252d22 800px, #222b33 950px, #25333b 1060px, #22252c 1180px, #22262d 1440px, #20252d 1700px, #262e35 1860px, #252e2f 1960px, #262d33 2160px);
}
.task { height: 116px; margin-bottom: 3px; display: flex; align-items: center; justify-content: center; flex: none; }
.task.start { height: 100px; margin-bottom: 8px; }
.task.active { background: linear-gradient(90deg, #76b9ed 5px, #52544b 5px 217px, #32352d 217px 220px, #44473f 220px); }
.task.open { background: linear-gradient(#76b9ed, #76b9ed) 0 10px / 5px 96px no-repeat; }
.task.multi { background: linear-gradient(90deg, #76b9ed 2px, #4d7493 2px 5px, #5f93bd 5px) 0 10px / 10px 96px no-repeat; }
.task.alert { background: linear-gradient(90deg, #ff7400 5px, #a6632b 5px); }
.tray { display: grid; grid-template-columns: repeat(3, 60px); grid-auto-rows: 60px; margin: 64px 0 0 35px; align-items: center; justify-items: center; }
.chevron { margin-left: 5px; }
.temp { font-size: 27px; line-height: 56px; padding-bottom: 3px; letter-spacing: -0.6px; -webkit-text-stroke: 0.7px currentColor; }
.t1 { color: #ffd400; }
.t2 { color: #ff00d4; }
.t3 { color: #6a3cff; }
.t4 { color: #0aa8ff; }
.t5 { color: #00ff80; }
.t6 { color: #40ff00; }
.lang { height: 60px; line-height: 60px; margin-top: 14px; text-align: center; letter-spacing: -0.6px; }
.clock { margin-top: 42px; display: flex; flex-direction: column; align-items: center; line-height: 41px; letter-spacing: -0.2px; }
.notify { margin-top: 46px; display: flex; justify-content: center; }
.peek { height: 3px; margin-top: 38px; background: #8b9094; }

/* Browser chrome */
.browser { flex: 1; display: flex; flex-direction: column; background: #3b3b3b; color: #fff; min-width: 0; position: relative; }
.titlebar { height: 80px; background: #202020; display: flex; align-items: center; font-size: 29px; }
.avatar { margin-left: 25px; }
.workspaces { margin-left: 49px; }
.tab-title { margin-left: 1533px; display: flex; align-items: center; gap: 21px; line-height: 40px; letter-spacing: -0.1px; }
.tab-title span { padding-top: 4px; }
.loading { position: absolute; left: 1391px; top: 0; width: 120px; height: 3px; background: #0078d7; }
.window-buttons { margin: 0 44px 0 auto; display: flex; gap: 89px; }

.toolbar { height: 100px; display: flex; align-items: center; padding-left: 50px; }
.back { margin-left: -1px; }
.reload { margin-left: 70px; }
.address { margin-left: 50px; width: 2445px; height: 80px; border: 2px solid #6a6a6a; border-radius: 40px; background: #292929; display: flex; align-items: center; padding-left: 41px; }
.url { margin-left: 37px; font-size: 34px; line-height: 48px; letter-spacing: -0.65px; color: #9a9a9a; }
.url b { font-weight: 400; color: #fff; }
.read { margin-left: auto; }
.star { margin: 0 37px 0 58px; }
.shazam { margin-left: 52px; }
.ublock { margin-left: 71px; position: relative; }
.count { position: absolute; left: 24px; top: 25px; width: 30px; height: 30px; border-radius: 8px; background: #666; font: 700 24px/31px "Open Sans", sans-serif; text-align: center; }
.puzzle { margin-left: 73px; }
.rule { width: 2px; height: 40px; background: #5c5c5c; flex: none; }
.toolbar .rule { margin-left: 42px; }
.update { margin-left: 10px; width: 222px; height: 75px; border: 3px solid #9bd69b; border-radius: 38px; display: flex; align-items: center; padding-left: 28px; font-size: 29px; letter-spacing: -0.5px; color: #9bd69b; }
.update svg { margin-left: auto; margin-right: 20px; }
.snip { margin-left: 40px; }
.dots { margin-left: 71px; }
.copilot { margin-left: 61px; }

.workarea { display: flex; height: 1970px; }
.vtabs { width: 128px; flex: none; display: flex; flex-direction: column; }
.collapse { margin: 27px 0 0 40px; }
.group { margin: 27px 0 27px 43px; }
.vtab { width: 80px; height: 80px; margin: 5px 0 5px 20px; display: flex; align-items: center; justify-content: center; padding-right: 2px; padding-left: 4px; flex: none; color: #fff; }
.vtab.asleep svg { opacity: .5; }
.vtab.asleep.light svg { opacity: .62; }
.vtab.dark { color: #24292e; }
.vtab.current { background: #4d4d4d; border-radius: 18px; box-shadow: 0 4px 12px rgba(0, 0, 0, .5); }
.vtab-rule { width: 80px; height: 2px; margin: 5px 0 0 20px; background: #606060; }
.new-tab { margin: 31px 0 0 41px; }

.column { flex: 1; min-width: 0; }
.bookmarks { height: 85px; display: flex; align-items: center; padding: 0 0 5px 27px; font-size: 29px; line-height: 40px; letter-spacing: -0.4px; white-space: nowrap; }
.bookmarks span { padding-bottom: 1px; }
.bm { display: flex; align-items: center; gap: 15px; flex: none; }
.vi { letter-spacing: -0.1px; }
.w210 { width: 210px; }
.w385 { width: 385px; }
.w173 { width: 173px; }
.w170 { width: 170px; }
.more { margin-left: 205px; }
.bookmarks .rule { margin-left: 47px; }
.folder { margin-left: 35px; }
.other { margin-left: 13px; }

.viewport { height: 1885px; margin-right: 9px; display: flex; border-radius: 20px; overflow: hidden; background: #2c2c2c; box-shadow: 0 0 4px rgba(0, 0, 0, .4); }
.page { flex: 1; min-width: 0; background: #fefefe; color: #333; overflow: hidden; }
.scrollbar { width: 38px; display: flex; flex-direction: column; align-items: center; padding: 24px 0; }
.up { border: 12px solid transparent; border-top: 0; border-bottom-color: #9f9f9f; }
.down { border: 12px solid transparent; border-bottom: 0; border-top-color: #9f9f9f; margin-top: auto; }
.thumb { width: 22px; height: 858px; margin-top: 22px; border-radius: 11px; background: #9f9f9f; }

/* Site header */
.site-header { height: 198px; background: #fff; box-shadow: 0 10px 25px rgba(0, 0, 0, .1); display: flex; align-items: center; padding-left: 50px; }
.brand { margin-left: 27px; padding-top: 4px; font-size: 63px; font-weight: 700; letter-spacing: -1.5px; line-height: 80px; color: #00bcd4; width: 130px; }
.search { margin-left: 38px; width: 550px; height: 108px; border-radius: 54px; background: #f0f0f0; display: flex; align-items: center; justify-content: space-between; padding: 0 28px 0 42px; font-size: 34px; letter-spacing: -0.9px; color: #757575; }
.search span { padding-top: 2px; }
.menu { margin-left: 506px; display: flex; align-items: center; font-size: 39px; font-weight: 500; -webkit-text-stroke: 0.7px #333; }
.menu span { width: 218px; }
.menu .m2 { width: 200px; letter-spacing: -0.9px; }
.menu .m3 { width: 272px; }
.menu .m4 { width: 138px; letter-spacing: -0.4px; }
.caret { border: 12px solid transparent; border-bottom: 0; border-top-color: #333; }
.caret.small { border-width: 10px 10px 0; margin-left: 9px; }
.chat { margin-left: 550px; }
.account { margin-left: 36px; width: 487px; height: 138px; border-radius: 55px; background: #f0f0f0; display: flex; align-items: center; padding-left: 26px; font-size: 35px; letter-spacing: -0.7px; font-weight: 500; white-space: nowrap; -webkit-text-stroke: 0.6px #333; }
.account span { margin-left: 20px; padding-top: 2px; width: 299px; }

/* Timetable */
.card { margin: 52px 86px 0; height: 2000px; padding: 50px; background: #fff; border-radius: 25px; box-shadow: 0 0 50px rgba(0, 0, 0, .1); }
h1 { height: 126px; border-bottom: 5px solid #007bff; font-size: 79px; font-weight: 700; line-height: 101px; letter-spacing: -0.8px; text-align: center; color: #333; }
.timetable { margin-top: 110px; border-left: 2px solid #dee2e6; }
.row { display: grid; grid-template-columns: 269px 1043px 925px 926px; border-bottom: 2px solid #dee2e6; }
.row > div { border-right: 2px solid #dee2e6; }
.row.head { height: 124px; margin-left: -2px; grid-template-columns: 271px 1043px 925px 926px; background: #343a40; color: #fff; font-size: 39px; font-weight: 700; line-height: 126px; letter-spacing: 0.6px; text-align: center; }
.row.head > div { border-color: #353b40; height: 122px; }
.row.head > div:first-child { letter-spacing: -0.6px; }
.day { padding: 26px 0 24px; text-align: center; font-size: 39px; font-weight: 700; line-height: 60px; letter-spacing: -0.9px; color: #212529; }
.slot { padding: 25px; }
.event { height: 375px; margin-bottom: 25px; padding: 26px 25px 0; border-left: 10px solid #007bff; border-radius: 12px; background: #e3f2fd; }
h2 { font-size: 34px; font-weight: 700; line-height: 52px; letter-spacing: -0.4px; color: #0d47a1; }
h2.loose { letter-spacing: 0.2px; }
.event p { font-size: 29px; line-height: 45px; margin-top: 13px; letter-spacing: -0.35px; }
.event .time { color: #4caf50; margin-top: 12px; }
.event .teacher { color: #6a1b9a; }
.event .mode { color: #e65100; font-style: italic; letter-spacing: 0.3px; margin-top: 12px; }
.badge { display: block; width: 214px; margin-top: 32px; height: 48px; border-radius: 14px; background: #6c757d; color: #fff; font-size: 27px; font-weight: 700; line-height: 48px; letter-spacing: -0.3px; text-align: center; }
```
